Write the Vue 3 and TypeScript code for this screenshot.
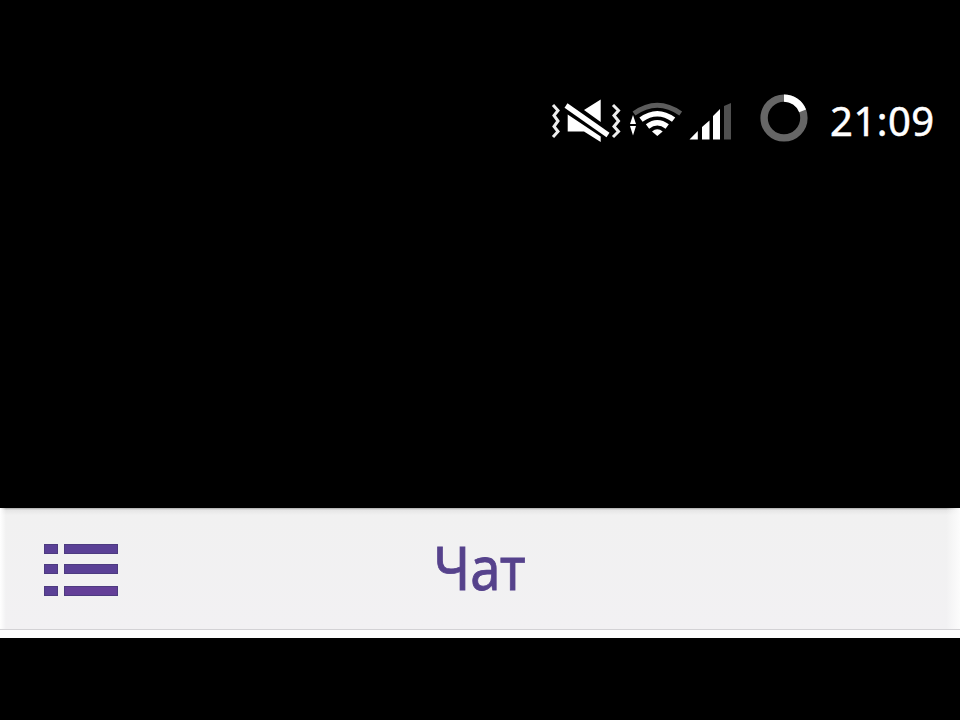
<script setup lang="ts">
const title: string = 'Чат'
const time: string = '21:09'
const rows: number[] = [0, 1, 2]
</script>

<template>
  <main class="screen">
    <div class="status">
      <svg class="icons" width="264" height="60" viewBox="548 90 264 60" fill="#fff">
        <g fill="none" stroke="#eee" stroke-width="3">
          <path d="M553 105L558 110.500L554 115.500L558 121L554 126.500L558 131.500L553 137" />
          <path d="M613 105L618.500 110.500L614 115.500L618.500 121L614 126.500L618.500 131.500L613 137" />
        </g>
        <path d="M584 110L600.700 99.500V122ZM567.700 114.500V131.500H584L600.700 142V136.500Z" />
        <path d="M566 105.500L608 135" stroke="#fff" stroke-width="5.200" />
        <path d="M633 115L636 124H630ZM630 126H636L633 135.500Z" />
        <g fill="none" stroke="#fff" stroke-width="5.400">
          <path d="M634 113.500Q657.300 97 680.700 113.500" stroke="#5c5c5c" stroke-width="4.800" />
          <path d="M641 119.700Q657.300 107.700 673.600 119.700" />
          <path d="M647.500 126.500Q657.300 119 667.200 126.500" />
        </g>
        <path d="M652 131.500Q657.300 127 662.700 131.500L657.300 136Z" />
        <path d="M689.500 139.500L697.800 131V139.500ZM702 139.500V127L709.500 120.500V139.500ZM713 139.500V116L720 109V139.500Z" />
        <path d="M724 139.500V106L731 103V139.500Z" fill="#4f4f4f" />
        <circle cx="784" cy="118" r="19.900" fill="none" stroke="#666" stroke-width="7.400" />
        <path d="M784 98.100A19.900 19.900 0 0 1 802.600 110.800" fill="none" stroke="#fff" stroke-width="7.400" />
      </svg>
      <time class="time">{{ time }}</time>
    </div>
    <header class="bar">
      <button class="menu" aria-label="Меню">
        <span v-for="row in rows" :key="row" class="row"><i class="dot"></i><i class="line"></i></span>
      </button>
      <h1 class="title">{{ title }}</h1>
      <span></span>
    </header>
    <div class="edge"></div>
  </main>
</template>

<style>
body { margin: 0; background: #000; }
</style>

<style scoped>
.screen {
  width: 960px;
  height: 720px;
  overflow: hidden;
  background: #000;
  font-family: "Noto Sans", sans-serif;
}
.status {
  box-sizing: border-box;
  height: 508px;
  padding: 90px 22px 0 0;
  display: flex;
  justify-content: flex-end;
  align-items: flex-start;
}
.icons { display: block; margin-right: 18px; }
.time {
  width: 108px;
  color: #fff;
  font-size: 40px;
  line-height: 62px;
  letter-spacing: 0.5px;
  white-space: nowrap;
  -webkit-text-stroke: 0.5px #fff;
}
.bar {
  box-sizing: border-box;
  height: 122px;
  padding: 0 44px;
  display: grid;
  grid-template-columns: 1fr auto 1fr;
  grid-template-rows: 121px;
  align-items: center;
  background:
    linear-gradient(90deg, #fff, transparent 6px, transparent 946px, #fcfcfc),
    linear-gradient(#aaa, #e5e5e5 2px, #f1f1f1 7px, #f2f1f3);
  border-bottom: 1px solid #d3d2d5;
}
.menu {
  padding: 0;
  border: 0;
  background: none;
  width: 74px;
  height: 52px;
  margin-top: 3px;
  display: flex;
  flex-direction: column;
  gap: 10px;
}
.row { display: flex; gap: 6px; height: 10px; }
.row:last-child { margin-top: 2px; }
.dot, .line {
  box-sizing: border-box;
  height: 10px;
  background: #5a4096;
  border: 1px solid #4d3b80;
}
.dot { width: 14px; }
.line { width: 54px; }
.row:last-child .line { background: #643f98; }
.title {
  margin: 0 0 4px;
  color: #56428c;
  font-size: 60px;
  font-weight: 400;
  line-height: 116px;
  transform: scaleX(0.91);
  -webkit-text-stroke: 0.8px #56428c;
}
.edge { height: 8px; background: #fcfcfc; }
</style>
